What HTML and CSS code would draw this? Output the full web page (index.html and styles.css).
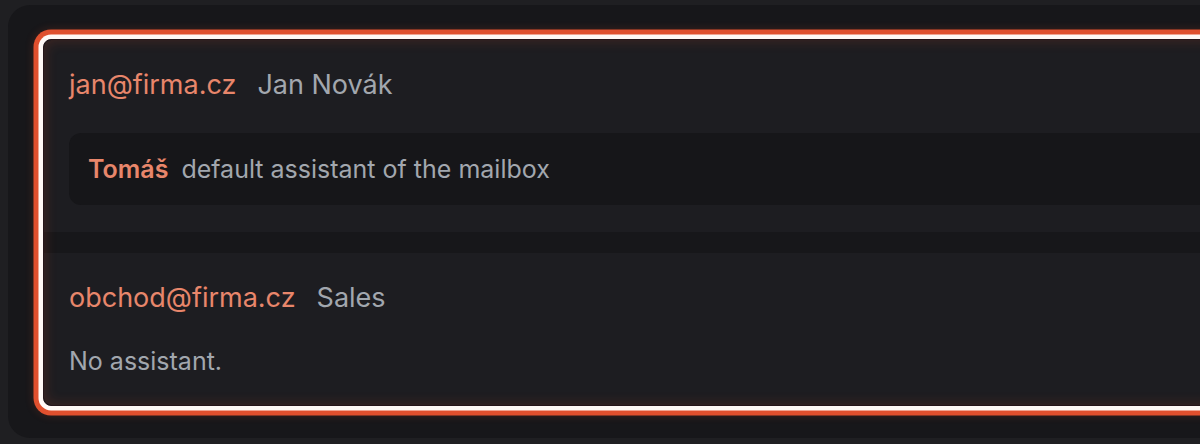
FILE: index.html
```html
<!DOCTYPE html>
<html>
<head>
<meta charset="utf-8">
<link rel="stylesheet" href="styles.css">
</head>
<body>
<div class="panel">
  <div class="list">
    <div class="mailbox">
      <div class="mailbox-head">
        <span class="address">jan@firma.cz</span>
        <span class="owner">Jan Novák</span>
      </div>
      <div class="assistant">
        <span class="assistant-name">Tomáš</span>
        <span class="assistant-role">default assistant of the mailbox</span>
      </div>
    </div>
    <div class="mailbox">
      <div class="mailbox-head">
        <span class="address">obchod@firma.cz</span>
        <span class="owner">Sales</span>
      </div>
      <div class="empty">No assistant.</div>
    </div>
  </div>
</div>
</body>
</html>
```

FILE: styles.css
```css
html, body {
  margin: 0;
  padding: 0;
  background: #1f1f22;
  overflow: hidden;
  font-family: "Inter", "Liberation Sans", sans-serif;
}

.panel {
  margin: 5px 0 0 8px;
  width: 1260px;
  height: 433px;
  box-sizing: border-box;
  background: #17171a;
  border-radius: 22px;
  padding: 34px 0 0 35px;
}

.list {
  position: relative;
  width: 1300px;
  box-sizing: border-box;
  border: 1px solid #26161a;
  border-radius: 8px;
  background: #17171a;
  display: flex;
  flex-direction: column;
  gap: 21px;
  box-shadow: 0 0 0 4.5px #fff9f6, 0 0 0 9.5px #e0502e, 0 0 10px 9px rgba(224, 80, 46, 0.22);
  overflow: hidden;
}

.list::after {
  content: "";
  position: absolute;
  inset: 0;
  border-radius: 8px;
  box-shadow: inset 0 0 12px 2px rgba(224, 80, 46, 0.16);
  pointer-events: none;
}

.mailbox {
  background: #1d1d21;
  padding: 25px 0 27px 25px;
}

.mailbox + .mailbox {
  padding-bottom: 26px;
}

.mailbox-head {
  display: flex;
  align-items: baseline;
  gap: 21px;
  font-size: 27px;
  line-height: 40px;
}

.address {
  color: #e8866b;
}

.owner {
  color: #a2a7ae;
}

.assistant {
  margin-top: 28px;
  background: #161619;
  border-radius: 12px;
  padding: 18px 20px 18px 19px;
  display: flex;
  align-items: baseline;
  gap: 13px;
  font-size: 25px;
  line-height: 36px;
}

.assistant-name {
  color: #e8866b;
  font-weight: 600;
}

.assistant-role {
  color: #a2a7ae;
}

.empty {
  margin-top: 25px;
  color: #a2a7ae;
  font-size: 25px;
  line-height: 36px;
}
```
